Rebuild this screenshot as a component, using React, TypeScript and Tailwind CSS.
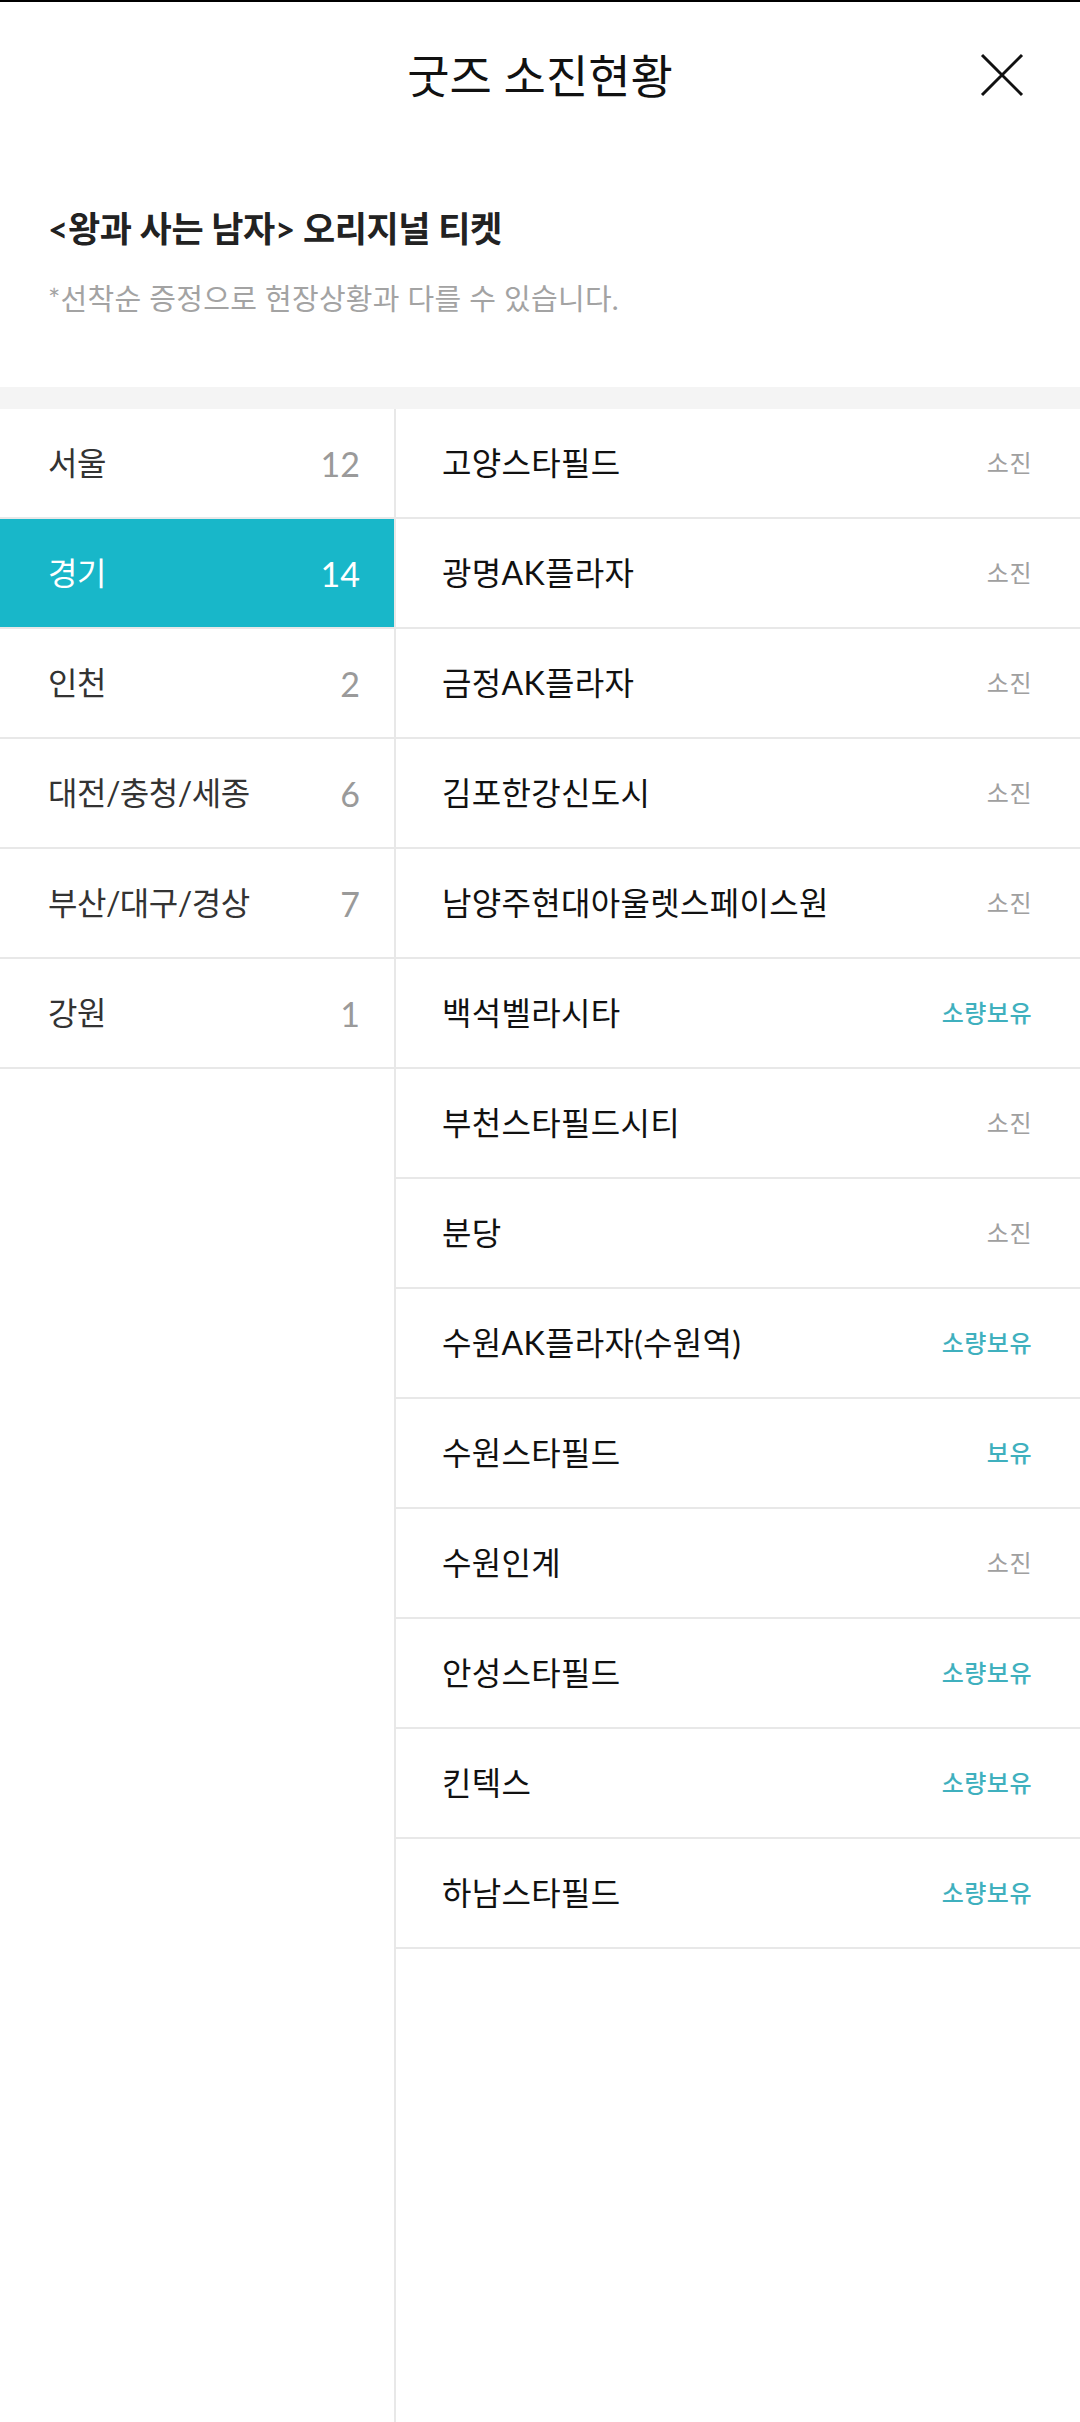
const regions = [
	{ name: "서울", count: 12 },
	{ name: "경기", count: 14 },
	{ name: "인천", count: 2 },
	{ name: "대전/충청/세종", count: 6 },
	{ name: "부산/대구/경상", count: 7 },
	{ name: "강원", count: 1 },
];

type Store = { name: string; status: string };

const stores: Store[] = [
	{ name: "고양스타필드", status: "소진" },
	{ name: "광명AK플라자", status: "소진" },
	{ name: "금정AK플라자", status: "소진" },
	{ name: "김포한강신도시", status: "소진" },
	{ name: "남양주현대아울렛스페이스원", status: "소진" },
	{ name: "백석벨라시타", status: "소량보유" },
	{ name: "부천스타필드시티", status: "소진" },
	{ name: "분당", status: "소진" },
	{ name: "수원AK플라자(수원역)", status: "소량보유" },
	{ name: "수원스타필드", status: "보유" },
	{ name: "수원인계", status: "소진" },
	{ name: "안성스타필드", status: "소량보유" },
	{ name: "킨텍스", status: "소량보유" },
	{ name: "하남스타필드", status: "소량보유" },
];

const font = { fontFamily: "Lato, 'Noto Sans CJK KR', sans-serif" };

export default function App() {
	const selected = "경기";

	return (
		<div className="min-h-[2422px] flex flex-col bg-white" style={font}>
			<div className="h-[2px] bg-black" />

			{/* Header */}
			<header className="relative h-[146px] flex items-center justify-center">
				<h1 className="text-[46px] tracking-[0px] text-[#111] font-normal">굿즈 소진현황</h1>
				<button className="absolute right-[56px] top-1/2 -translate-y-1/2 w-[44px] h-[44px]">
					<svg viewBox="0 0 44 44" className="w-full h-full" fill="none" stroke="#111" strokeWidth="3">
						<line x1="2" y1="2" x2="42" y2="42" />
						<line x1="42" y1="2" x2="2" y2="42" />
					</svg>
				</button>
			</header>

			{/* Goods title */}
			<section className="px-[48px] pt-[60px] pb-[70px]">
				<h2 className="text-[35px] leading-[40px] tracking-[-0.4px] font-bold text-[#222]">
					&lt;왕과 사는 남자&gt; 오리지널 티켓
				</h2>
				<p className="mt-[33px] text-[29px] leading-[36px] tracking-[0.3px] text-[#a3a3a3]">
					*선착순 증정으로 현장상황과 다를 수 있습니다.
				</p>
			</section>

			<div className="h-[22px] bg-[#f4f4f4]" />

			<div className="flex flex-1">
				{/* Regions */}
				<aside className="w-[396px] shrink-0 border-r-2 border-[#e8e8e8]">
					{regions.map((r) => {
						const active = r.name === selected;
						return (
							<div
								key={r.name}
								className={
									active
										? "h-[110px] flex items-center justify-between pl-[48px] pr-[34px] border-b-2 border-[#e8e8e8] bg-[#18b7c9]"
										: "h-[110px] flex items-center justify-between pl-[48px] pr-[34px] border-b-2 border-[#e8e8e8]"
								}
							>
								<span
									className={
										active
											? "text-[32px] tracking-[-0.5px] text-white"
											: "text-[32px] tracking-[-0.5px] text-[#333]"
									}
								>
									{r.name}
								</span>
								<span className={active ? "text-[34px] text-white" : "text-[34px] text-[#9a9a9a]"}>
									{r.count}
								</span>
							</div>
						);
					})}
				</aside>

				{/* Stores */}
				<div className="flex-1">
					{stores.map((s) => (
						<div
							key={s.name}
							className="h-[110px] flex items-center justify-between pl-[46px] pr-[48px] border-b-2 border-[#e8e8e8]"
						>
							<span className="text-[32px] tracking-[0.3px] text-[#111]">{s.name}</span>
							<span
								className={
									s.status === "소진"
										? "text-[24px] tracking-[0.5px] text-[#a0a0a0]"
										: "text-[24px] tracking-[0.5px] font-medium text-[#3fb0be]"
								}
							>
								{s.status}
							</span>
						</div>
					))}
				</div>
			</div>
		</div>
	);
}
